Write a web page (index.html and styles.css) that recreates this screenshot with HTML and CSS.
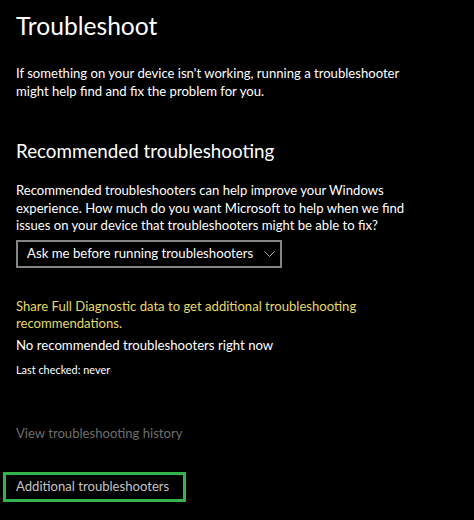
FILE: index.html
```html
<!DOCTYPE html>
<html lang="en">
<head>
<meta charset="utf-8">
<title>Troubleshoot</title>
<link rel="stylesheet" href="styles.css">
</head>
<body>
<main class="page">
  <h1 class="title">Troubleshoot</h1>
  <p class="text intro">If something on your device isn't working, running a troubleshooter might help find and fix the problem for you.</p>

  <h2 class="subtitle">Recommended troubleshooting</h2>
  <p class="text desc">Recommended troubleshooters can help improve your Windows experience. How much do you want Microsoft to help when we find issues on your device that troubleshooters might be able to fix?</p>

  <div class="select">
    <span class="select-label">Ask me before running troubleshooters</span>
    <svg class="chevron" width="11" height="6" viewBox="0 0 11 6" aria-hidden="true"><path d="M0.5 0.5 L5.5 5.5 L10.5 0.5" fill="none" stroke="#b4b4b4" stroke-width="1"/></svg>
  </div>

  <p class="text link-yellow">Share Full Diagnostic data to get additional troubleshooting recommendations.</p>
  <p class="text status">No recommended troubleshooters right now</p>
  <p class="checked">Last checked: never</p>

  <p class="text history">View troubleshooting history</p>

  <div class="highlight">
    <span class="text additional">Additional troubleshooters</span>
  </div>
</main>
</body>
</html>
```

FILE: styles.css
```css
html, body {
  margin: 0;
  padding: 0;
  background: #000;
}

body {
  font-family: "Lato", "Open Sans", sans-serif;
  color: #fff;
  width: 474px;
  height: 520px;
  overflow: hidden;
}

.page {
  padding: 0 16px;
  display: flex;
  flex-direction: column;
  align-items: flex-start;
}

.title {
  margin: 9px 0 0;
  font-size: 24.6px;
  line-height: 34px;
  font-weight: 400;
  color: #fff;
}

.text {
  margin: 0;
  font-size: 13.1px;
  line-height: 17.5px;
}

.intro {
  margin-top: 22px;
  width: 405px;
}

.subtitle {
  margin: 37px 0 0;
  font-size: 18.8px;
  line-height: 28px;
  font-weight: 400;
}

.desc {
  margin-top: 17px;
  width: 405px;
}

.select {
  margin-top: 5px;
  box-sizing: border-box;
  width: 266px;
  height: 28px;
  border: 2px solid #858585;
  display: flex;
  align-items: center;
  padding: 0 9px 0 9px;
  gap: 11px;
  white-space: nowrap;
}

.select-label {
  font-size: 13.2px;
  line-height: 17.5px;
  color: #fff;
}

.chevron {
  display: block;
  flex: none;
}

.link-yellow {
  margin-top: 30px;
  color: #e4da62;
  width: 400px;
}

.status {
  margin-top: 3px;
  font-size: 13.2px;
  line-height: 18px;
}

.checked {
  margin: 8px 0 0;
  font-size: 10.9px;
  line-height: 16px;
}

.history {
  margin-top: 47px;
  color: #6e6e6e;
}

.highlight {
  margin: 30px 0 0 -13px;
  box-sizing: border-box;
  width: 183px;
  height: 30px;
  border: 3px solid #32b44a;
  padding: 3px 0 0 10px;
  white-space: nowrap;
}

.additional {
  color: #c4c4c4;
  display: block;
}
```
